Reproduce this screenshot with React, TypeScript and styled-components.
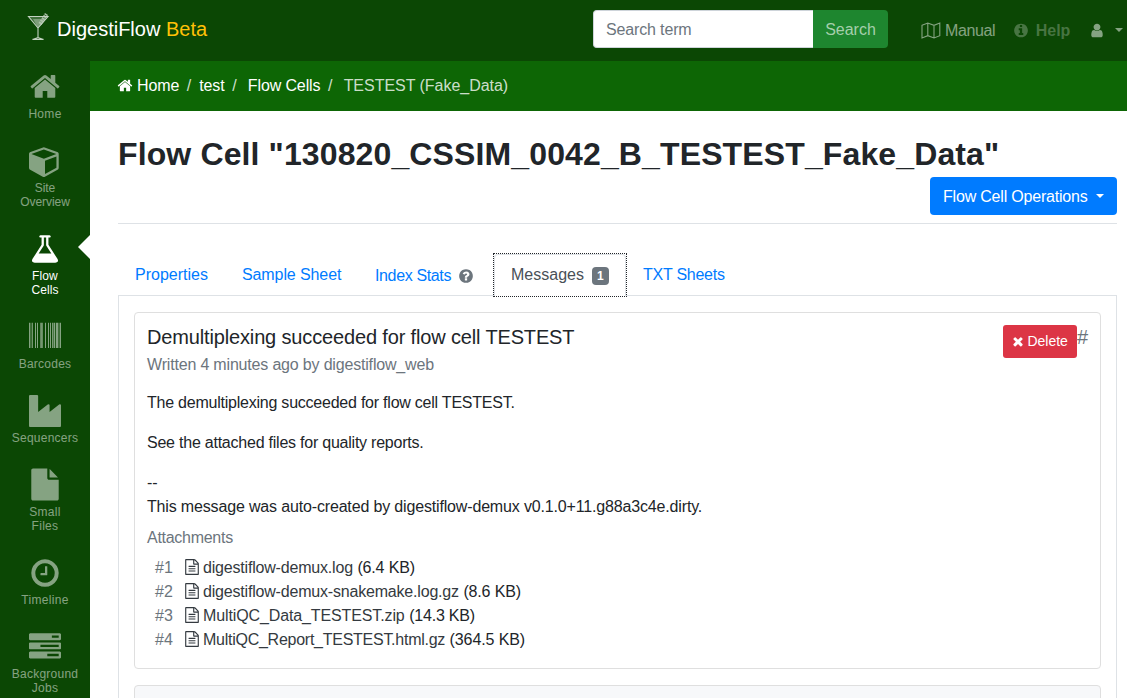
import React from "react";
import styled, { createGlobalStyle } from "styled-components";

const Global = createGlobalStyle`
  * { box-sizing: border-box; }
  html, body { margin: 0; height: 698px; overflow: hidden; background: #fff; }
  body { font: 400 16px/24px "Liberation Sans", Arial, sans-serif; color: #212529; }
  a { color: inherit; text-decoration: none; }
`;

const paths = {
  home: "M1472 992v480q0 26-19 45t-45 19h-384v-384h-256v384h-384q-26 0-45-19t-19-45v-480q0-1 .5-3t.5-3l575-474 575 474q1 2 1 6zm223-69l-62 74q-8 9-21 11h-3q-13 0-21-7l-692-577-692 577q-12 8-24 7-13-2-21-11l-62-74q-8-10-7-23.5t11-21.5l719-599q32-26 76-26t76 26l244 204v-195q0-14 9-23t23-9h192q14 0 23 9t9 23v408l219 182q10 8 11 21.5t-7 23.5z",
  cube: "M896 1629l640-349v-636l-640 233v752zm-64-865l698-254-698-254-698 254zm832-252v768q0 35-18 65t-49 47l-704 384q-28 16-61 16t-61-16l-704-384q-31-17-49-47t-18-65v-768q0-40 23-73t61-47l704-256q22-8 44-8t44 8l704 256q38 14 61 47t23 73z",
  flask: "M1591 1448q56 89 21.5 152.5t-140.5 63.5h-1152q-106 0-140.5-63.5t21.5-152.5l503-793v-399h-64q-26 0-45-19t-19-45 19-45 45-19h512q26 0 45 19t19 45-19 45-45 19h-64v399zm-779-725l-272 429h712l-272-429-20-31v-436h-128v436z",
  barcode: "M0 100h62v1416h-62zM94 100h30v1416h-30zM160 100h56v1416h-56zM336 100h56v1416h-56zM448 100h56v1416h-56zM616 100h40v1416h-40zM680 100h90v1416h-90zM896 100h56v1416h-56zM1064 100h56v1416h-56zM1176 100h56v1416h-56zM1288 100h50v1416h-50zM1372 100h84v1416h-84zM1500 100h124v1416h-124zM1656 100h40v1416h-40zM1728 100h64v1416h-64z",
  industry: "M448 0q26 0 45 19t19 45v891l536-429q17-14 40-14 26 0 45 19t19 45v379l536-429q17-14 40-14 26 0 45 19t19 45v1152q0 26-19 45t-45 19h-1664q-26 0-45-19t-19-45v-1664q0-26 19-45t45-19h384z",
  file: "M1152 512v-472q22 14 36 28l408 408q14 14 28 36h-472zm-128 32q0 40 28 68t68 28h544v1056q0 40-28 68t-68 28h-1344q-40 0-68-28t-28-68v-1600q0-40 28-68t68-28h800v544z",
  clock: "M1024 544v448q0 14-9 23t-23 9h-320q-14 0-23-9t-9-23v-64q0-14 9-23t23-9h224v-352q0-14 9-23t23-9h64q14 0 23 9t9 23zm416 352q0-148-73-273t-198-198-273-73-273 73-198 198-73 273 73 273 198 198 273 73 273-73 198-198 73-273zm224 0q0 209-103 385.5t-279.5 279.5-385.5 103-385.5-103-279.5-279.5-103-385.5 103-385.5 279.5-279.5 385.5-103 385.5 103 279.5 279.5 103 385.5z",
  tasks: "M1024 1408h640v-128h-640v128zm-384-512h1024v-128h-1024v128zm640-512h384v-128h-384v128zm512 832v256q0 26-19 45t-45 19h-1664q-26 0-45-19t-19-45v-256q0-26 19-45t45-19h1664q26 0 45 19t19 45zm0-512v256q0 26-19 45t-45 19h-1664q-26 0-45-19t-19-45v-256q0-26 19-45t45-19h1664q26 0 45 19t19 45zm0-512v256q0 26-19 45t-45 19h-1664q-26 0-45-19t-19-45v-256q0-26 19-45t45-19h1664q26 0 45 19t19 45z",
  times: "M1490 1322q0 40-28 68l-136 136q-28 28-68 28t-68-28l-294-294-294 294q-28 28-68 28t-68-28l-136-136q-28-28-28-68t28-68l294-294-294-294q-28-28-28-68t28-68l136-136q28-28 68-28t68 28l294 294 294-294q28-28 68-28t68 28l136 136q28 28 28 68t-28 68l-294 294 294 294q28 28 28 68z",
  question: "M1024 1376v-192q0-14-9-23t-23-9h-192q-14 0-23 9t-9 23v192q0 14 9 23t23 9h192q14 0 23-9t9-23zm256-672q0-88-55.5-163t-138.5-116-170-41q-243 0-371 213-15 24 8 42l132 100q7 6 19 6 16 0 25-12 53-68 86-92 34-24 86-24 48 0 85.5 26t37.5 59q0 38-20 61t-68 45q-63 28-115.5 86.5t-52.5 125.5v36q0 14 9 23t23 9h192q14 0 23-9t9-23q0-19 21.5-49.5t54.5-49.5q32-18 49-28.5t46-35 44.5-48 28-60.5 12.5-81zm384 192q0 209-103 385.5t-279.5 279.5-385.5 103-385.5-103-279.5-279.5-103-385.5 103-385.5 279.5-279.5 385.5-103 385.5 103 279.5 279.5 103 385.5z",
  info: "M1152 1376v-160q0-14-9-23t-23-9h-96v-512q0-14-9-23t-23-9h-320q-14 0-23 9t-9 23v160q0 14 9 23t23 9h96v320h-96q-14 0-23 9t-9 23v160q0 14 9 23t23 9h448q14 0 23-9t9-23zm-128-896v-160q0-14-9-23t-23-9h-192q-14 0-23 9t-9 23v160q0 14 9 23t23 9h192q14 0 23-9t9-23zm640 416q0 209-103 385.5t-279.5 279.5-385.5 103-385.5-103-279.5-279.5-103-385.5 103-385.5 279.5-279.5 385.5-103 385.5 103 279.5 279.5 103 385.5z",
  user: "M1536 1399q0 109-62.5 187t-150.5 78h-854q-88 0-150.5-78t-62.5-187q0-85 8.5-160.5t31.5-152 58.5-131 94-89 134.5-34.5q131 128 313 128t313-128q76 0 134.5 34.5t94 89 58.5 131 31.5 152 8.5 160.5zm-256-887q0 159-112.5 271.5t-271.5 112.5-271.5-112.5-112.5-271.5 112.5-271.5 271.5-112.5 271.5 112.5 112.5 271.5z",
  fileText: "M1596 380q28 28 48 76t20 88v1152q0 40-28 68t-68 28h-1344q-40 0-68-28t-28-68v-1600q0-40 28-68t68-28h896q40 0 88 20t76 48zm-444-244v376h376q-10-29-22-41l-313-313q-12-12-41-22zm384 1528v-1024h-416q-40 0-68-28t-28-68v-416h-768v1536h1280zm-1024-864q0-14 9-23t23-9h704q14 0 23 9t9 23v64q0 14-9 23t-23 9h-704q-14 0-23-9t-9-23v-64zm736 224q14 0 23 9t9 23v64q0 14-9 23t-23 9h-704q-14 0-23-9t-9-23v-64q0-14 9-23t23-9h704zm0 256q14 0 23 9t9 23v64q0 14-9 23t-23 9h-704q-14 0-23-9t-9-23v-64q0-14 9-23t23-9h704z",
};
type IconName = keyof typeof paths;

const Svg = styled.svg<{ $lift?: number }>`
  display: block;
  flex: none;
  fill: currentColor;
  overflow: visible;
  transform: translateY(${(p) => -(p.$lift ?? 0)}px);
`;
const Icon = ({ name, size = 16, lift = 0 }: { name: IconName; size?: number; lift?: number }) => (
  <Svg $lift={lift} width={size} height={size} viewBox="0 0 1792 1792"><path d={paths[name]} /></Svg>
);

/* Text run with its own tracking. */
const Run = styled.span<{ $ls: number }>`letter-spacing: ${(p) => p.$ls}px;`;

const Header = styled.header`
  display: flex;
  align-items: flex-start;
  height: 61px;
  padding: 10px 2px 0 26px;
  background: #0b4704;
`;
const Brand = styled.a`
  display: flex;
  font-size: 20px;
  line-height: 38px;
  color: #fff;
  white-space: pre;
  flex: 1;
`;
const Beta = styled.span`color: #ffc107;`;
const Logo = styled(Svg)`margin: 1px 7px 0 0;`;
const SearchForm = styled.form`display: flex; width: 295px; height: 38px; margin-right: 33px;`;
const SearchInput = styled.input`
  width: 220px;
  padding: 8px 12px 6px;
  border: 1px solid #ced4da;
  border-right: 0;
  border-radius: 4px 0 0 4px;
  font: inherit;
  letter-spacing: -0.15px;
  &::placeholder { color: #6c757d; opacity: 1; }
`;
const SearchButton = styled.button`
  width: 75px;
  padding: 2px 0 0;
  border: 0;
  border-radius: 0 4px 4px 0;
  background: #1e862f;
  color: #a5cfac;
  font: inherit;
`;
const TopLink = styled.a<{ $w: number; $dim?: boolean }>`
  display: flex;
  align-items: center;
  gap: 4px;
  width: ${(p) => p.$w}px;
  height: 42px;
  color: rgba(255, 255, 255, ${(p) => (p.$dim ? 0.25 : 0.5)});
  font-weight: ${(p) => (p.$dim ? 700 : 400)};
`;
const Caret = styled.span`
  margin-bottom: 3px;
  border: 4.8px solid transparent;
  border-top-color: currentColor;
  border-bottom: 0;
`;

const Body = styled.div`display: flex; height: 637px; overflow: hidden;`;
const Sidebar = styled.nav`flex: none; width: 90px; background: #0b4704;`;
const SideItem = styled.a<{ $active?: boolean }>`
  position: relative;
  display: flex;
  flex-direction: column;
  align-items: center;
  gap: 4px;
  padding: 10px 0 14px;
  font-size: 12px;
  line-height: 14px;
  text-align: center;
  white-space: pre;
  color: ${(p) => (p.$active ? "#fff" : "rgba(255,255,255,.5)")};
`;
const Arrow = styled.span`
  position: absolute;
  right: 0;
  top: 12px;
  border: 12px solid transparent;
  border-right-color: #fff;
  border-left: 0;
`;

const Main = styled.main`flex: 1; min-width: 0;`;
const Crumbs = styled.div`
  display: flex;
  align-items: center;
  height: 50px;
  padding-left: 27px;
  background: #0d6605;
  color: #fff;
`;
const Crumb = styled.a<{ $gap: number; $current?: boolean }>`
  display: flex;
  align-items: center;
  gap: 4px;
  margin-right: ${(p) => p.$gap}px;
  letter-spacing: ${(p) => (p.$current ? -0.03 : -0.12)}px;
  color: ${(p) => (p.$current ? "rgba(255,255,255,.8)" : "#fff")};
`;
const Slash = styled.span<{ $gap: number }>`
  margin-right: ${(p) => p.$gap}px;
  color: rgba(255, 255, 255, 0.8);
`;

const Content = styled.div`padding: 24px 10px 0 28px;`;
const PageTitle = styled.h1`
  margin: 0;
  height: 42px;
  font-size: 32px;
  line-height: 38px;
  letter-spacing: 0.125px;
  white-space: nowrap;
`;
const TitleBar = styled.div`
  display: flex;
  justify-content: flex-end;
  height: 47px;
  border-bottom: 1px solid #dee2e6;
`;
const Operations = styled.button`
  display: flex;
  align-items: center;
  gap: 8px;
  width: 187px;
  height: 38px;
  padding: 2px 0 0 13px;
  border: 0;
  border-radius: 4px;
  background: #007bff;
  color: #fff;
  font: inherit;
  letter-spacing: -0.2px;
`;
const Tabs = styled.div`
  display: flex;
  height: 72px;
  padding-top: 30px;
  border-bottom: 1px solid #dee2e6;
`;
const Tab = styled.a<{ $w: number; $active?: boolean; $low?: boolean }>`
  display: flex;
  align-items: center;
  gap: 7px;
  width: ${(p) => p.$w}px;
  height: 42px;
  padding: ${(p) => (p.$low ? 2 : 0)}px 0 0 16px;
  border: 1px solid ${(p) => (p.$active ? "#dee2e6" : "transparent")};
  border-width: 0 1px;
  box-shadow: ${(p) => (p.$active ? "inset 0 1px #dee2e6" : "none")};
  border-radius: 4px 4px 0 0;
  color: ${(p) => (p.$active ? "#495057" : "#007bff")};
  background: ${(p) => (p.$active ? "#fff" : "transparent")};
`;
const FocusFrame = styled.div`
  width: 132px;
  height: 42px;
  outline: 1px dotted #212529;
`;
const HelpMark = styled.span`color: #6c757d;`;
const Badge = styled.span`
  width: 17px;
  height: 18px;
  margin: 2px 0 0 1px;
  border-radius: 4px;
  background: #6c757d;
  color: #fff;
  font-size: 12px;
  font-weight: 700;
  line-height: 18px;
  text-align: center;
`;
const Pane = styled.section`
  height: 402px;
  overflow: hidden;
  padding: 16px 15px 0;
  border: solid #dee2e6;
  border-width: 0 1px;
`;
const Card = styled.article`
  height: 357px;
  padding: 12px;
  border: 1px solid #dfdfdf;
  border-radius: 4px;
  margin-bottom: 16px;
`;
const NextCard = styled(Card)`height: 40px; background: #f7f8fa;`;
const CardHead = styled.div`display: flex; justify-content: space-between; height: 28px;`;
const CardTitle = styled.h5`
  margin: 0;
  font-size: 20px;
  font-weight: 400;
  line-height: 24px;
  letter-spacing: -0.15px;
`;
const Actions = styled.div`display: flex; color: #6c757d; font-size: 20px;`;
const Delete = styled.button`
  display: flex;
  align-items: center;
  gap: 2.5px;
  width: 74px;
  height: 33px;
  padding: 0 0 0 8px;
  border: 0;
  border-radius: 3px;
  background: #dc3545;
  color: #fff;
  font: 14px/21px "Liberation Sans", Arial, sans-serif;
`;
const Byline = styled.div`color: #6c757d; margin-bottom: 14px; letter-spacing: -0.18px;`;
const Text = styled.p`margin: 0 0 16px; letter-spacing: -0.23px;`;
const Signature = styled.p`margin: 0 0 7px; letter-spacing: -0.16px;`;
const AttachTitle = styled.h6`
  margin: 0 0 6px;
  font-size: 16px;
  font-weight: 400;
  line-height: 24px;
  letter-spacing: -0.28px;
  color: #6c757d;
`;
const Attachment = styled.div`display: flex; align-items: center; padding-left: 8px; height: 24px;`;
const Index = styled.span`width: 29px; color: #6c757d;`;
const FileLink = styled.a`display: flex; align-items: center; gap: 3px; color: #343a40; margin-right: 4.5px;`;

const nav: { icon: IconName; label: string; ls: number; lift?: number; active?: boolean }[] = [
  { icon: "home", label: "Home", ls: 0.3, lift: 0.6 },
  { icon: "cube", label: "Site\nOverview", ls: -0.05 },
  { icon: "flask", label: "Flow\nCells", ls: 0.1, active: true },
  { icon: "barcode", label: "Barcodes", ls: 0.25 },
  { icon: "industry", label: "Sequencers", ls: 0.25 },
  { icon: "file", label: "Small\nFiles", ls: 0.3, lift: 0.6 },
  { icon: "clock", label: "Timeline", ls: 0.3 },
  { icon: "tasks", label: "Background\nJobs", ls: 0.25 },
];
const files: { name: string; ls: number; size: string; sizeLs: number }[] = [
  { name: "digestiflow-demux.log", ls: -0.19, size: "6.4 KB", sizeLs: -0.15 },
  { name: "digestiflow-demux-snakemake.log.gz", ls: -0.19, size: "8.6 KB", sizeLs: -0.15 },
  { name: "MultiQC_Data_TESTEST.zip", ls: -0.12, size: "14.3 KB", sizeLs: -0.2 },
  { name: "MultiQC_Report_TESTEST.html.gz", ls: -0.26, size: "364.5 KB", sizeLs: -0.1 },
];

export default function App() {
  return (
    <>
      <Global />
      <Header>
        <Brand>
          <Logo width="24" height="30" viewBox="0 0 24 30">
            <path d="M2.5 5.5H22L12 17Z" fill="#3f6f3a" />
            <path d="M7 8H20L12 17Z" fill="#7d9d79" />
            <path d="M14 13L20.5 3" fill="none" stroke="#a9bfa6" strokeWidth="3.6" strokeDasharray="2 .6" />
            <path d="M2.5 5.5H22L12 17ZM12 17V26.5M6.5 28.4L12 26.6L17.5 28.4Z" fill="none" stroke="#c3d2c1" strokeWidth="1.1" />
          </Logo>
          <span>DigestiFlow <Beta>Beta</Beta></span>
        </Brand>
        <SearchForm>
          <SearchInput placeholder="Search term" />
          <SearchButton type="button">Search</SearchButton>
        </SearchForm>
        <TopLink $w={92}>
          <Svg $lift={0.5} width="20" height="16" viewBox="0 0 20 16">
            <path d="M1 2.8L6.8.6L13 2.8L18.8.6V13.2L13 15.4L6.8 13.2L1 15.4ZM6.8 .6V13.2M13 2.8V15.4" fill="none" stroke="currentColor" strokeWidth="1.1" />
          </Svg>
          <Run $ls={-0.4}>Manual</Run>
        </TopLink>
        <TopLink $w={76} $dim><Icon name="info" lift={0.5} /><Run $ls={0}>&#8202;&#8202;Help</Run></TopLink>
        <TopLink $w={26}><Icon name="user" lift={0.5} /></TopLink>
        <TopLink $w={10}><Caret /></TopLink>
      </Header>
      <Body>
        <Sidebar>
          {nav.map((n) => (
            <SideItem key={n.icon} $active={n.active}>
              <Icon name={n.icon} size={32} lift={n.lift} />
              <Run $ls={n.ls}>{n.label}</Run>
              {n.active && <Arrow />}
            </SideItem>
          ))}
        </Sidebar>
        <Main>
          <Crumbs>
            <Crumb $gap={7.6}><Icon name="home" lift={0.5} />Home</Crumb>
            <Slash $gap={8}>/</Slash>
            <Crumb $gap={7.6}>test</Crumb>
            <Slash $gap={11.2}>/</Slash>
            <Crumb $gap={7.6}>Flow Cells</Crumb>
            <Slash $gap={11.2}>/</Slash>
            <Crumb $gap={0} $current>TESTEST (Fake_Data)</Crumb>
          </Crumbs>
          <Content>
            <PageTitle>Flow Cell "130820_CSSIM_0042_B_TESTEST_Fake_Data"</PageTitle>
            <TitleBar><Operations>Flow Cell Operations<Caret /></Operations></TitleBar>
            <Tabs>
              <Tab $w={107}>Properties</Tab>
              <Tab $w={133}><Run $ls={-0.1}>Sample Sheet</Run></Tab>
              <Tab $w={136} $low><Run $ls={-0.36}>Index Stats</Run><HelpMark><Icon name="question" /></HelpMark></Tab>
              <FocusFrame><Tab $w={132} $active>Messages<Badge>1</Badge></Tab></FocusFrame>
              <Tab $w={120}><Run $ls={-0.25}>TXT Sheets</Run></Tab>
            </Tabs>
            <Pane>
              <Card>
                <CardHead>
                  <CardTitle>Demultiplexing succeeded for flow cell TESTEST</CardTitle>
                  <Actions><Delete><Icon name="times" size={14} lift={0.7} />Delete</Delete>#</Actions>
                </CardHead>
                <Byline>Written 4 minutes ago by digestiflow_web</Byline>
                <Text>The demultiplexing succeeded for flow cell TESTEST.</Text>
                <Text>See the attached files for quality reports.</Text>
                <Signature>--<br />This message was auto-created by digestiflow-demux v0.1.0+11.g88a3c4e.dirty.</Signature>
                <AttachTitle>Attachments</AttachTitle>
                {files.map((f, i) => (
                  <Attachment key={f.name}>
                    <Index>#{i + 1}</Index>
                    <FileLink><Icon name="fileText" lift={1} /><Run $ls={f.ls}>{f.name}</Run></FileLink>
                    <Run $ls={f.sizeLs}>({f.size})</Run>
                  </Attachment>
                ))}
              </Card>
              <NextCard />
            </Pane>
          </Content>
        </Main>
      </Body>
    </>
  );
}
